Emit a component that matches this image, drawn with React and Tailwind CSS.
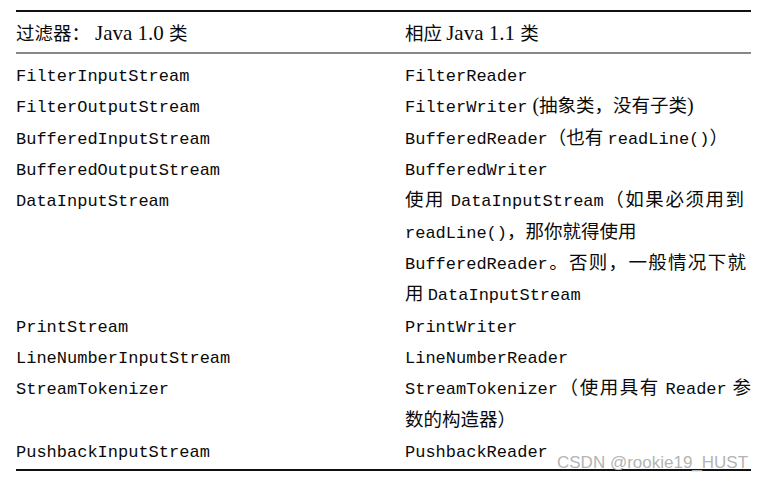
const M = ({ children }) => (
    <span className="font-['Liberation_Mono',monospace] text-[17px]">{children}</span>
);

const C = ({ children }) => (
    <span className="font-['Noto_Sans_CJK_SC',sans-serif] text-[18.5px] leading-none">{children}</span>
);

const S = ({ children, className = "" }) => (
    <span className={"font-['Liberation_Serif','Noto_Sans_CJK_SC',serif] text-[21px] leading-none " + className}>
        {children}
    </span>
);

// one visual line of the table body
const Line = ({ children, justify, width }) => (
    <div
        className={
            "h-[31.33px] leading-[31.33px] whitespace-nowrap " +
            (justify ? "text-justify [text-align-last:justify] " : "") +
            (width || "")
        }
    >
        {children}
    </div>
);

const rows = [
    { left: "FilterInputStream", right: [<Line key="a"><M>FilterReader</M></Line>] },
    {
        left: "FilterOutputStream",
        right: [
            <Line key="a">
                <M>FilterWriter</M>
                <span className="inline-block ml-[5px] font-['Liberation_Serif',serif] text-[20px] leading-none">(</span>
                <C>抽象类，没有子类</C>
                <span className="font-['Liberation_Serif',serif] text-[20px] leading-none">)</span>
            </Line>,
        ],
    },
    {
        left: "BufferedInputStream",
        right: [
            <Line key="a">
                <M>BufferedReader</M><C>（也有 </C><M>readLine()</M><C>）</C>
            </Line>,
        ],
    },
    { left: "BufferedOutputStream", right: [<Line key="a"><M>BufferedWriter</M></Line>] },
    {
        left: "DataInputStream",
        right: [
            <Line key="a" justify width="w-[339px]">
                <C>使用 </C><M>DataInputStream</M><C>（如果必须用到</C>
            </Line>,
            <Line key="b">
                <M>readLine()</M><C>，那你就得使用</C>
            </Line>,
            <Line key="c" justify width="w-[341px]">
                <M>BufferedReader</M><C>。否则，一般情况下就</C>
            </Line>,
            <Line key="d">
                <C>用 </C><M>DataInputStream</M>
            </Line>,
        ],
    },
    { left: "PrintStream", right: [<Line key="a"><M>PrintWriter</M></Line>] },
    { left: "LineNumberInputStream", right: [<Line key="a"><M>LineNumberReader</M></Line>] },
    {
        left: "StreamTokenizer",
        right: [
            <Line key="a" justify width="w-[346px]">
                <M>StreamTokenizer</M><C>（使用具有 </C><M>Reader</M><C> 参</C>
            </Line>,
            <Line key="b">
                <C>数的构造器）</C>
            </Line>,
        ],
    },
    { left: "PushbackInputStream", right: [<Line key="a"><M>PushbackReader</M></Line>] },
];

const App = () => {
    return (
        <div className="relative w-[768px] h-[482px] bg-white text-[#0a0a0a] font-['Liberation_Mono',monospace] text-[17px] overflow-hidden">
            <div className="pt-[10px] pl-[16px]">
                <div className="w-[735px] h-[2px] bg-[#111]" />

                {/* header */}
                <div className="grid grid-cols-[389px_346px] h-[40px] items-start pt-[11px]">
                    <div className="whitespace-nowrap leading-[26px]">
                        <C>过滤器：</C><S className="ml-[5px]">Java 1.0 </S><C>类</C>
                    </div>
                    <div className="whitespace-nowrap leading-[26px]">
                        <C>相应 </C><S>Java 1.1 </S><C>类</C>
                    </div>
                </div>
                <div className="w-[735px] h-[2px] bg-[#888]" />

                {/* body */}
                <div className="pt-[7px] pb-[1px]">
                    {rows.map((row) => (
                        <div key={row.left} className="grid grid-cols-[389px_346px]">
                            <Line>
                                <M>{row.left}</M>
                            </Line>
                            <div>{row.right}</div>
                        </div>
                    ))}
                </div>
                <div className="w-[735px] h-[2px] bg-[#111]" />
            </div>

            <div className="absolute left-[557px] top-[454px] font-['Liberation_Sans',sans-serif] text-[17px] leading-none text-[#b4b4b4] whitespace-nowrap">
                CSDN @rookie19_HUST
            </div>
        </div>
    );
};

export default App;
